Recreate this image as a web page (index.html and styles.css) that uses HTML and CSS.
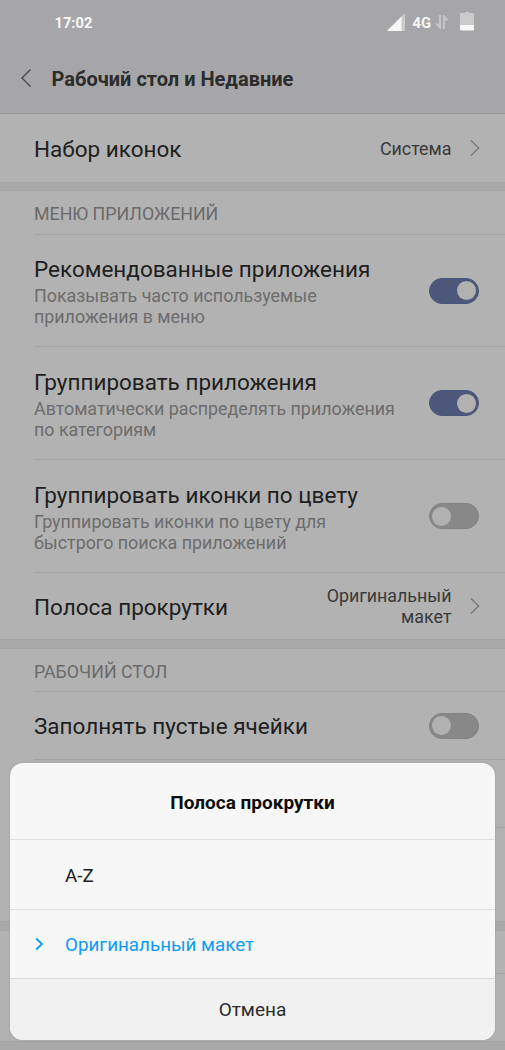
FILE: index.html
```html
<!DOCTYPE html>
<html lang="ru">
<head>
<meta charset="utf-8">
<title>Рабочий стол и Недавние</title>
<link rel="stylesheet" href="styles.css">
</head>
<body>
<div class="phone">
  <header class="top">
    <div class="status">
      <span class="clock">17:02</span>
      <div class="status-icons">
        <svg class="signal" width="18" height="18" viewBox="0 0 18 18"><path d="M18 0V18H0Z" fill="#cbcbcc"/><path d="M14.5 3.5V18H0Z" fill="#f6f6f6"/></svg>
        <span class="network">4G</span>
        <svg class="traffic" width="14" height="16" viewBox="0 0 14 16"><path d="M4 1H6V15H5L0 9.500H4ZM8 15V1H9L14 6.500H10V15Z" fill="#c6c6c7"/></svg>
        <svg class="battery" width="14" height="19" viewBox="0 0 14 19"><path d="M5 0H9V1H13Q14 1 14 2V13H0V2Q0 1 1 1H5Z" fill="#cbcbcc"/><path d="M0 13H14V17Q14 18.500 12.500 18.500H1.500Q0 18.500 0 17Z" fill="#f8f8f8"/></svg>
      </div>
    </div>
    <div class="titlebar">
      <svg class="back" width="12" height="20" viewBox="0 0 12 20" fill="none" stroke="#444" stroke-width="1.300"><path d="M10.500 1.500L2 10L10.500 18.500"/></svg>
      <h1>Рабочий стол и Недавние</h1>
    </div>
  </header>
  <main>
    <section class="group theme">
      <div class="row first"><h2>Набор иконок</h2><span class="value">Система</span><svg class="chevron" width="10" height="18" viewBox="0 0 10 18"><path d="M1 1.500L8.700 9L1 16.500"/></svg></div>
    </section>
    <section class="group apps">
      <h3>МЕНЮ ПРИЛОЖЕНИЙ</h3>
      <div class="row tall short"><div class="copy"><h2>Рекомендованные приложения</h2><p>Показывать часто используемые<br>приложения в меню</p></div><span class="switch on"></span></div>
      <div class="row tall"><div class="copy"><h2>Группировать приложения</h2><p>Автоматически распределять приложения<br>по категориям</p></div><span class="switch on"></span></div>
      <div class="row tall"><div class="copy"><h2>Группировать иконки по цвету</h2><p>Группировать иконки по цвету для<br>быстрого поиска приложений</p></div><span class="switch"></span></div>
      <div class="row scrollbar"><h2>Полоса прокрутки</h2><span class="value">Оригинальный<br>макет</span><svg class="chevron" width="10" height="18" viewBox="0 0 10 18"><path d="M1 1.500L8.700 9L1 16.500"/></svg></div>
    </section>
    <section class="group desktop">
      <h3>РАБОЧИЙ СТОЛ</h3>
      <div class="row"><h2>Заполнять пустые ячейки</h2><span class="switch"></span></div>
      <div class="row"></div>
      <div class="row last"></div>
    </section>
    <section class="group bottom">
      <h3></h3>
      <div class="row"></div>
    </section>
  </main>
  <div class="dialog">
    <div class="dialog-title">Полоса прокрутки</div>
    <div class="option"><span>A-Z</span></div>
    <div class="option selected"><svg width="9" height="14" viewBox="0 0 9 14" fill="none" stroke="#0c9bf5" stroke-width="1.800"><path d="M1.200 1.500L7 7L1.200 12.500"/></svg><span>Оригинальный макет</span></div>
    <div class="cancel">Отмена</div>
  </div>
</div>
</body>
</html>
```

FILE: styles.css
```css
* { box-sizing: border-box; }
body { margin: 0; font-family: Roboto, sans-serif; background: #a9a9a9; }
h1, h2, h3, p { margin: 0; font-weight: 400; }
.phone { position: relative; width: 505px; height: 1050px; overflow: hidden; background: #a9a9a9; }
.top { height: 114px; background: #a6a6a8; border-bottom: 1px solid #949494; }
.status { height: 45px; display: flex; justify-content: space-between; padding: 0 31px 0 55px; align-items: center; }
.clock { margin-left: -0.500px; color: #f8f8f8; font-size: 14.700px; line-height: 18px; font-weight: 700; }
.status-icons { display: flex; align-items: center; padding-bottom: 2px; }
.network { margin: 3px 0 0 7.500px; width: 19.500px; font-size: 14.700px; line-height: 18px; font-weight: 700; color: #f6f6f6; }
.traffic { margin: 1px 0 0 3px; }
.battery { margin-left: 11px; }
.titlebar { height: 68px; display: flex; align-items: center; padding: 0 0 1px 20px; }
.back { margin-bottom: 1px; }
h1 { margin-left: 19.500px; font-size: 20px; line-height: 26px; font-weight: 700; color: #2c2c2c; }
.group { background: #b2b2b2; border-bottom: 1px solid #a5a5a5; margin-bottom: 8px; }
.group.theme { margin-bottom: 7px; }
.group + .group { border-top: 1px solid #a6a6a6; }
.row { height: 68px; margin-left: 34px; padding-right: 26px; display: flex; align-items: center; border-top: 1px solid #a4a4a4; }
.row.first { border-top: 0; padding-top: 1px; }
.row.tall { height: 113px; }
.row.tall.short { height: 112px; }
.row.scrollbar { height: 67px; }
h2 { flex: 1; white-space: nowrap; font-size: 22.500px; line-height: 28px; color: #202020; padding-top: 1px; }
.copy { flex: 1; padding-top: 2px; }
.short .copy { padding-top: 1px; }
.tall h2 { line-height: 26px; padding: 0; }
.tall p { padding-top: 3px; }
p { font-size: 17.850px; line-height: 21px; color: #6c6c6c; white-space: nowrap; }
h3 { height: 42px; margin-left: 34px; font-size: 17.800px; line-height: 45px; color: #6a6a6a; }
.apps h3 { height: 43px; }
.value { font-size: 17.850px; line-height: 21px; text-align: right; color: #3a3a3a; }
.first .value { padding: 0 0 1px; }
.first .chevron { margin-bottom: 2px; }
.chevron { margin-left: 18px; margin-right: -0.500px; fill: none; stroke: #777; stroke-width: 1.200; }
.switch { width: 50px; height: 26px; border: 1px solid #828282; border-radius: 13px; background: #888; display: flex; align-items: center; padding: 0 2px; margin-right: 0.300px; }
.switch::before { content: ""; width: 19px; height: 19px; border-radius: 50%; background: #b1b1b1; }
.switch.on { background: #4c5779; border-color: #48547b; justify-content: flex-end; }
.row.last { height: 94px; }
.dialog { position: absolute; left: 10px; top: 763px; width: 485px; height: 277px; border-radius: 13px; overflow: hidden; background: #f7f7f7; box-shadow: 0 0 2px #8888; }
.dialog-title { height: 76px; padding-top: 2px; line-height: 76px; text-align: center; font-size: 19px; font-weight: 700; color: #0d0d0d; }
.option { height: 70px; border-top: 1px solid #dedede; display: flex; align-items: center; padding: 2px 0 0 55px; font-size: 18.800px; color: #202020; }
.option.selected { padding-left: 25px; color: #0c9bf5; height: 69px; }
.option.selected svg { margin-bottom: 2px; }
.option.selected span { margin-left: 21px; }
.cancel { height: 62px; border-top: 1px solid #d8d8d8; background: #f1f1f1; line-height: 62px; text-align: center; font-size: 19px; color: #2c2c2c; }
```
